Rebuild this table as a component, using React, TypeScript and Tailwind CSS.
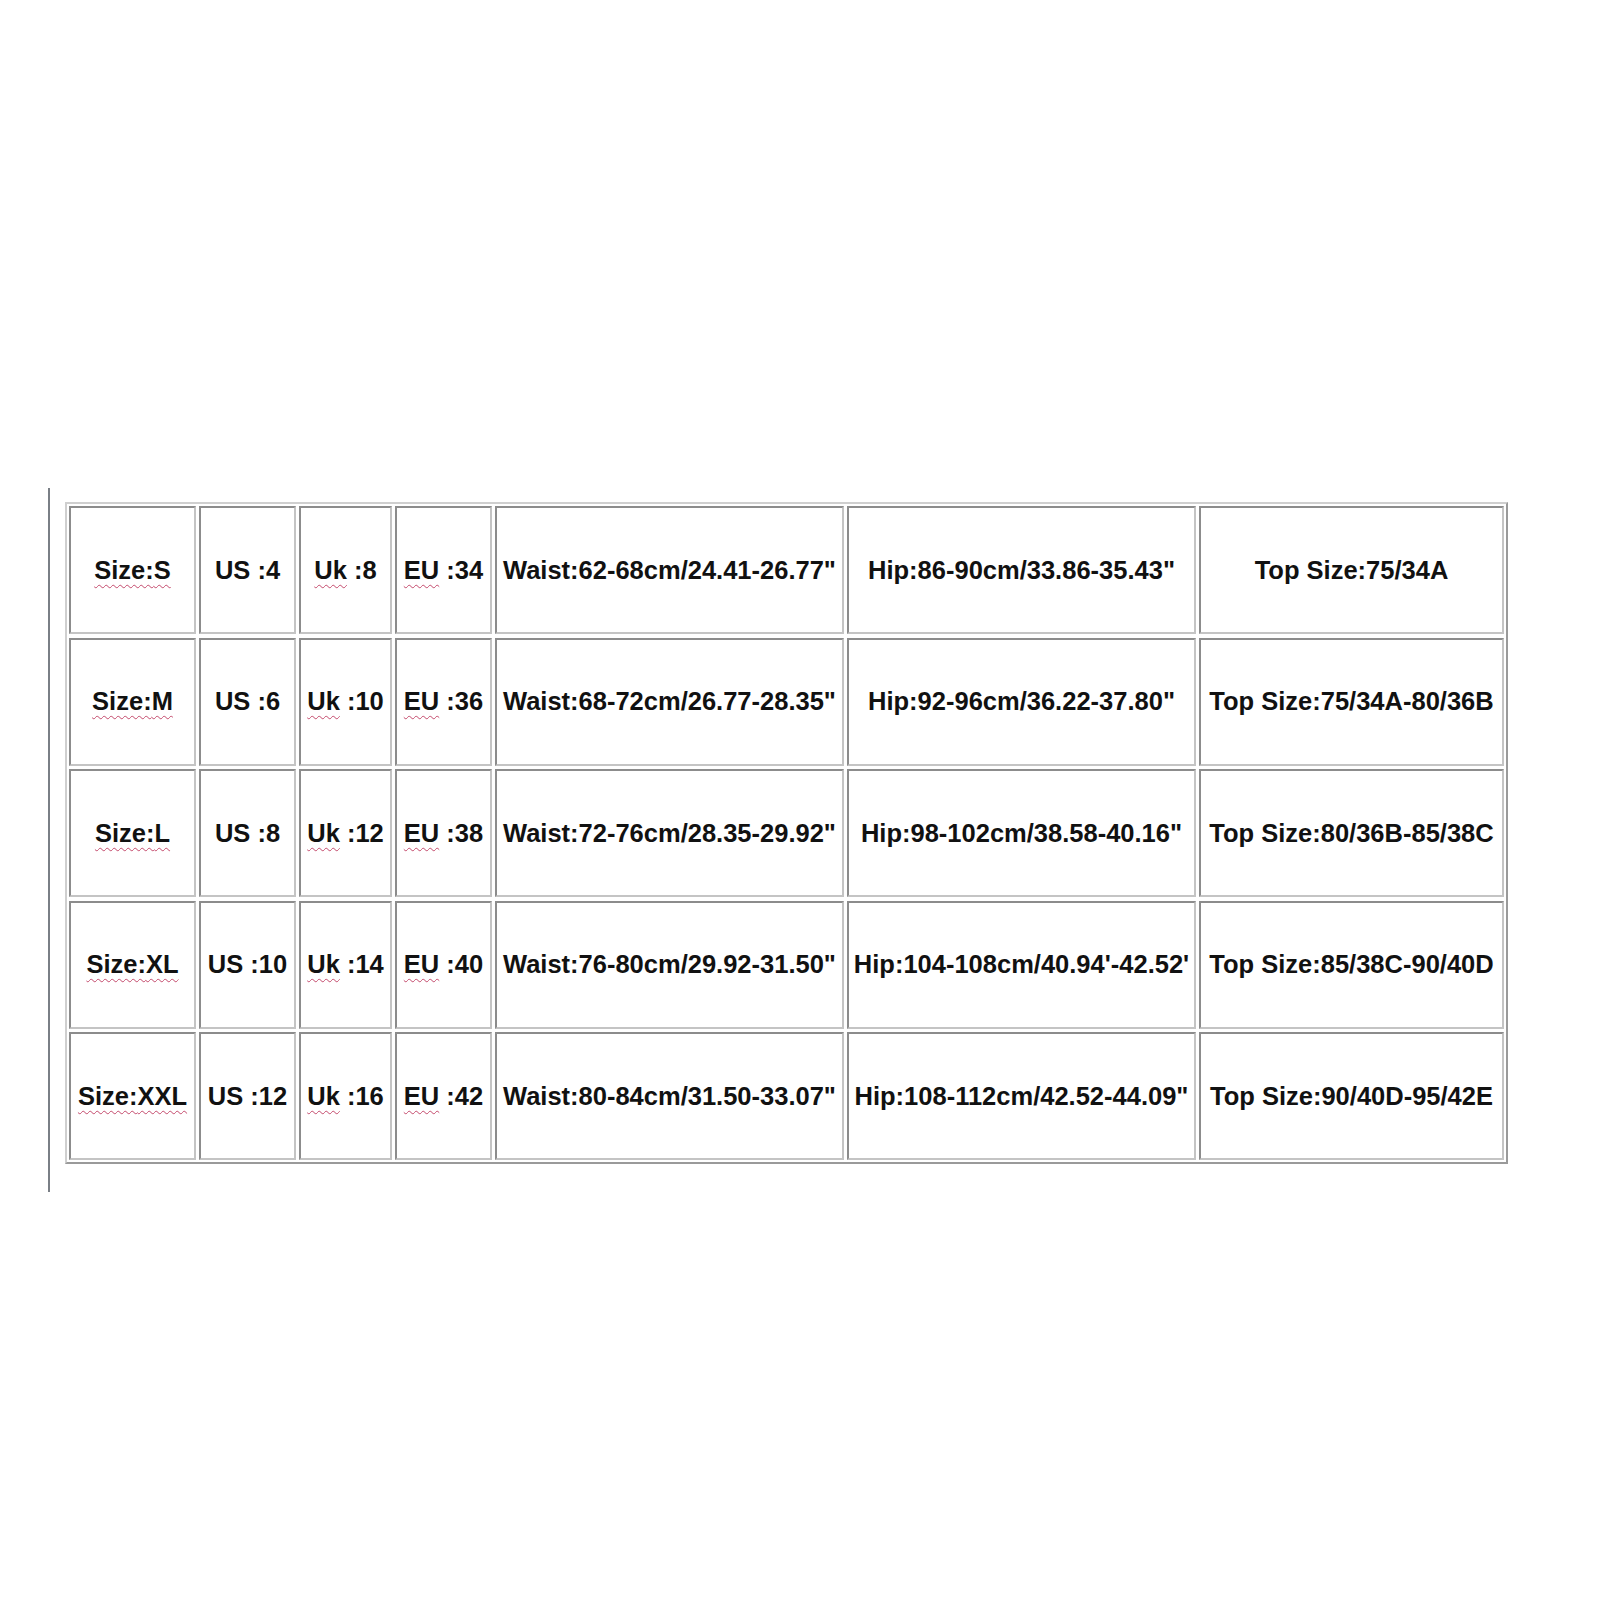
import React from "react";

const rows = [
  ["S", "4", "8", "34", 'Waist:62-68cm/24.41-26.77"', 'Hip:86-90cm/33.86-35.43"', "Top Size:75/34A"],
  ["M", "6", "10", "36", 'Waist:68-72cm/26.77-28.35"', 'Hip:92-96cm/36.22-37.80"', "Top Size:75/34A-80/36B"],
  ["L", "8", "12", "38", 'Waist:72-76cm/28.35-29.92"', 'Hip:98-102cm/38.58-40.16"', "Top Size:80/36B-85/38C"],
  ["XL", "10", "14", "40", 'Waist:76-80cm/29.92-31.50"', "Hip:104-108cm/40.94'-42.52'", "Top Size:85/38C-90/40D"],
  ["XXL", "12", "16", "42", 'Waist:80-84cm/31.50-33.07"', 'Hip:108-112cm/42.52-44.09"', "Top Size:90/40D-95/42E"],
];

// spellcheck-style squiggle under some words
function Squiggle({ children }: { children: React.ReactNode }) {
  return (
    <span className="underline decoration-wavy decoration-[#c44a6c] decoration-1 underline-offset-[5px]">
      {children}
    </span>
  );
}

function Cell({ children }: { children: React.ReactNode }) {
  return (
    <div className="flex items-center justify-center h-[128px] whitespace-nowrap border-2 border-t-[#8c8c8c] border-l-[#8c8c8c] border-r-[#c4c4c4] border-b-[#c4c4c4]">
      {children}
    </div>
  );
}

export default function App() {
  return (
    <div className="min-h-[1600px] bg-white flex items-start pt-[488px] pl-[48px]">
      <div className="w-[2px] h-[704px] bg-[#7a7f86]" />

      <div
        className="ml-[15px] mt-[14px] p-[2px] border-2 border-t-[#cfcfcf] border-l-[#cfcfcf] border-r-[#9a9a9a] border-b-[#9a9a9a] grid grid-cols-[127px_97px_93px_97px_349px_349px_305px] gap-x-[3px] gap-y-[3.5px] text-[25.5px] font-bold text-[#111]"
        style={{ fontFamily: '"Liberation Sans", Arial, sans-serif' }}
      >
        {rows.map(([size, us, uk, eu, waist, hip, top]) => (
          <React.Fragment key={size}>
            <Cell>
              <Squiggle>Size:{size}</Squiggle>
            </Cell>
            <Cell>US :{us}</Cell>
            <Cell>
              <span>
                <Squiggle>Uk</Squiggle> :{uk}
              </span>
            </Cell>
            <Cell>
              <span>
                <Squiggle>EU</Squiggle> :{eu}
              </span>
            </Cell>
            <Cell>{waist}</Cell>
            <Cell>{hip}</Cell>
            <Cell>{top}</Cell>
          </React.Fragment>
        ))}
      </div>
    </div>
  );
}
